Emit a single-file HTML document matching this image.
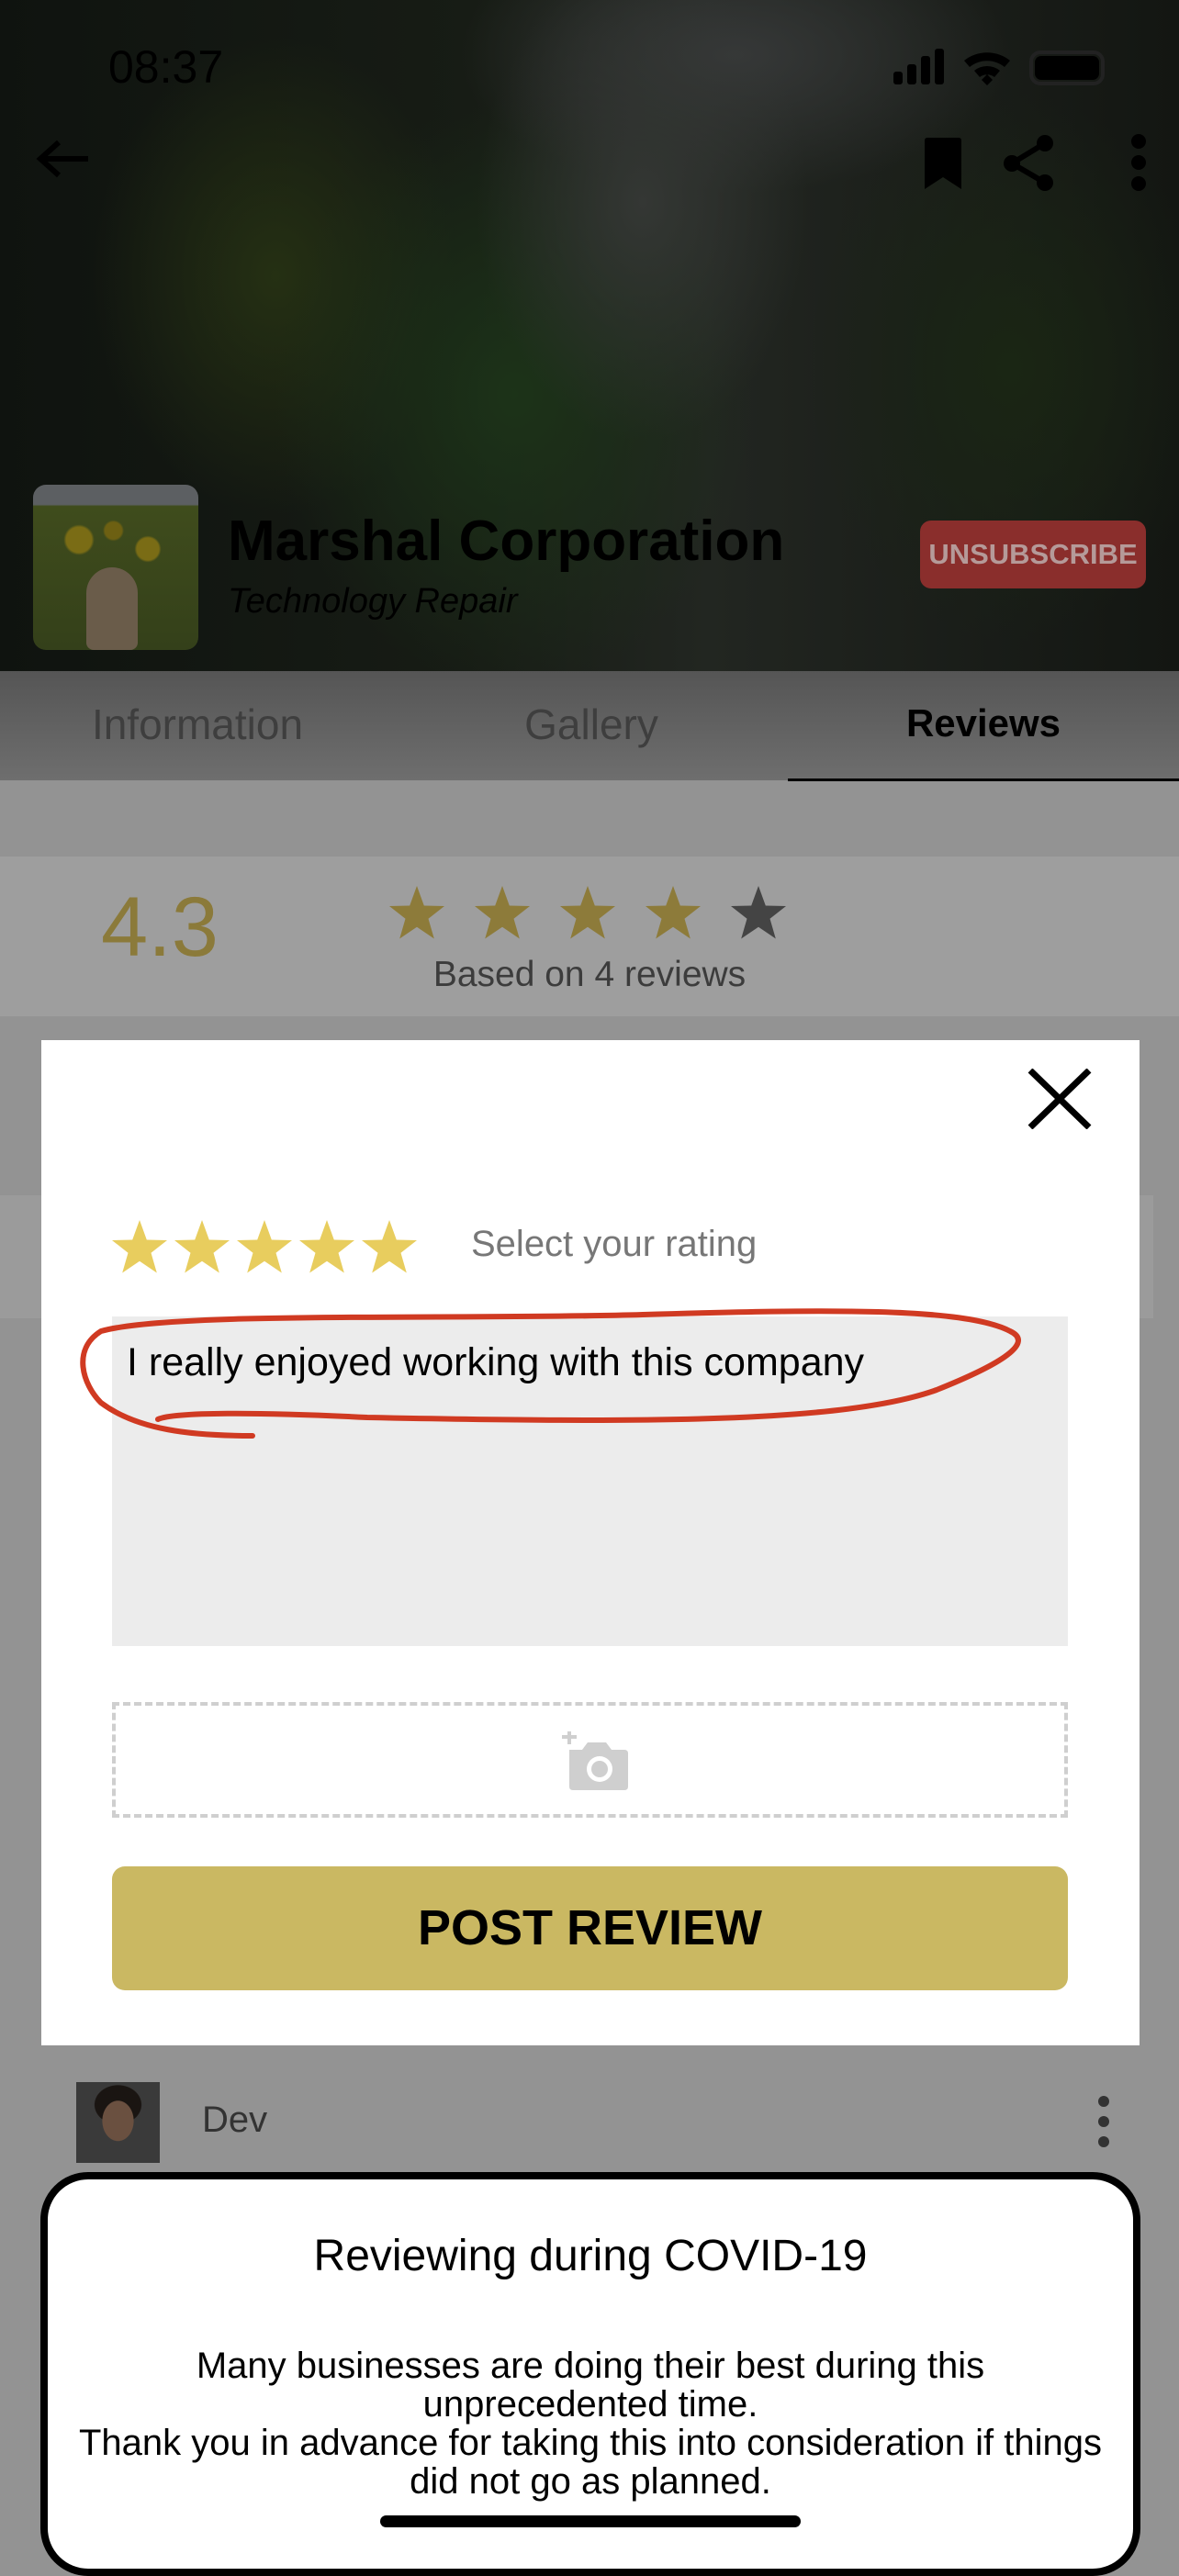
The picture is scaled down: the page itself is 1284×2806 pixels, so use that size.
<!DOCTYPE html>
<html><head><meta charset="utf-8"><style>
*{margin:0;padding:0;box-sizing:border-box}
body{width:1284px;height:2778px;position:relative;overflow:hidden;background:#939393;font-family:"Liberation Sans",sans-serif}
.a{position:absolute}
</style></head><body>
<div class="a" style="left:0;top:0;width:1284px;height:850px;overflow:hidden;background:
radial-gradient(ellipse 180px 260px at 700px 220px,#343734,transparent),
radial-gradient(ellipse 260px 320px at 560px 430px,#1c3318,transparent),
radial-gradient(ellipse 200px 260px at 300px 300px,#253013,transparent),
radial-gradient(ellipse 220px 300px at 1100px 400px,#1a2614,transparent),
radial-gradient(ellipse 300px 150px at 800px 60px,#363838,transparent),
linear-gradient(90deg,#0f130f,#171c15 40%,#222621 60%,#131612)">
</div>
<div class="a" style="left:0;top:731px;width:1284px;height:119px;background:linear-gradient(#555,#6e6e6e)"></div>
<div class="a" style="left:0;top:762px;width:430px;text-align:center;font-size:46px;color:#3e3e3e">Information</div>
<div class="a" style="left:430px;top:762px;width:428px;text-align:center;font-size:46px;color:#3e3e3e">Gallery</div>
<div class="a" style="left:858px;top:764px;width:426px;text-align:center;font-size:42px;color:#000;font-weight:bold">Reviews</div>
<div class="a" style="left:858px;top:848px;width:426px;height:3px;background:#000"></div>

<div class="a" style="left:118px;top:44px;font-size:50px;color:#000">08:37</div>
<svg class="a" style="left:970px;top:50px" width="240" height="46" viewBox="0 0 240 46">
<rect x="3" y="28" width="10" height="14" rx="3"/><rect x="18" y="20" width="10" height="22" rx="3"/><rect x="33" y="11" width="10" height="31" rx="3"/><rect x="48" y="3" width="10" height="39" rx="3"/>
<path d="M80 16a40 40 0 0 1 50 0l-6 7a30 30 0 0 0-38 0z M91 27a22 22 0 0 1 28 0l-6 7a13 13 0 0 0-16 0z M99 37l6-6 6 6-6 6z"/>
<rect x="153" y="7" width="78" height="34" rx="10" fill="none" stroke="#222" stroke-width="4"/><rect x="157" y="11" width="70" height="26" rx="7"/>
</svg>
<svg class="a" style="left:36px;top:150px" width="70" height="46" viewBox="0 0 70 46"><path d="M60 23H10M28 5L8 23l20 18" fill="none" stroke="#000" stroke-width="6"/></svg>
<svg class="a" style="left:1004px;top:148px" width="46" height="58" viewBox="0 0 46 58"><path d="M3 5q0-3 3-3h34q3 0 3 3v53L23 45 3 58z"/></svg>
<svg class="a" style="left:1090px;top:144px" width="64" height="66" viewBox="0 0 64 66"><circle cx="48" cy="12" r="9"/><circle cx="12" cy="34" r="9"/><circle cx="48" cy="55" r="9"/><path d="M48 12L12 34l36 21" fill="none" stroke="#000" stroke-width="6"/></svg>
<svg class="a" style="left:1226px;top:144px" width="28" height="66" viewBox="0 0 28 66"><circle cx="14" cy="10" r="8"/><circle cx="14" cy="33" r="8"/><circle cx="14" cy="56" r="8"/></svg>

<div class="a" style="left:36px;top:528px;width:180px;height:180px;border-radius:14px;overflow:hidden;background:linear-gradient(#5c5f62 0,#5c5f62 12%,#3f4c1c 13%,#34401a 100%)">
<div class="a" style="left:20px;top:30px;width:150px;height:100px;background:radial-gradient(circle at 20% 30%,#7a6c15 10%,transparent 12%),radial-gradient(circle at 70% 40%,#7a6c15 10%,transparent 12%),radial-gradient(circle at 45% 20%,#6d6012 8%,transparent 10%)"></div>
<div class="a" style="left:58px;top:90px;width:56px;height:90px;border-radius:28px 28px 8px 8px;background:#6a5c4a"></div>
</div>
<div class="a" style="left:248px;top:554px;font-size:62px;font-weight:bold;color:#000">Marshal Corporation</div>
<div class="a" style="left:248px;top:634px;font-size:38px;font-style:italic;color:#000">Technology Repair</div>
<div class="a" style="left:1002px;top:567px;width:246px;height:74px;border-radius:12px;background:#8a2e2c;color:#b59a99;font-size:31px;font-weight:bold;text-align:center;line-height:74px">UNSUBSCRIBE</div>

<div class="a" style="left:0;top:933px;width:1284px;height:174px;background:#9e9e9e"></div>
<div class="a" style="left:110px;top:958px;font-size:92px;color:#8b7a3a">4.3</div>
<svg class="a" style="left:424px;top:965px" width="440" height="70" viewBox="0 0 440 70">
<defs><path id="s" d="M30 0l7.8 21.5 22.2.5-17.5 13.7 6.3 21.8L30 44.7 11.2 57.5l6.3-21.8L0 22l22.2-.5z"/></defs>
<use href="#s" x="0" fill="#8d7b3a"/><use href="#s" x="93" fill="#8d7b3a"/><use href="#s" x="186" fill="#8d7b3a"/><use href="#s" x="279" fill="#8d7b3a"/><use href="#s" x="372" fill="#444"/>
</svg>
<div class="a" style="left:400px;top:1040px;width:484px;text-align:center;font-size:39px;color:#3c3c3c">Based on 4 reviews</div>

<div class="a" style="left:0;top:1302px;width:1256px;height:134px;background:#9b9b9b"></div>

<div class="a" style="left:45px;top:1133px;width:1196px;height:1095px;background:#fff"></div>
<svg class="a" style="left:1118px;top:1164px" width="72" height="66" viewBox="0 0 72 66"><path d="M4 2l64 62M68 2L4 64" stroke="#000" stroke-width="7"/></svg>
<svg class="a" style="left:122px;top:1329px" width="340" height="62" viewBox="0 0 340 62">
<defs><path id="t" d="M30 0l7.8 21.5 22.2.5-17.5 13.7 6.3 21.8L30 44.7 11.2 57.5l6.3-21.8L0 22l22.2-.5z"/></defs>
<g fill="#e8cd5e"><use href="#t" x="0"/><use href="#t" x="68"/><use href="#t" x="136"/><use href="#t" x="204"/><use href="#t" x="272"/></g>
</svg>
<div class="a" style="left:513px;top:1333px;font-size:40px;color:#777">Select your rating</div>
<div class="a" style="left:122px;top:1434px;width:1041px;height:359px;background:#ececec"></div>
<div class="a" style="left:138px;top:1460px;font-size:43px;color:#000">I really enjoyed working with this company</div>
<svg class="a" style="left:0;top:1400px" width="1284" height="240" viewBox="0 0 1284 240">
<path d="M275 164C210 164 150 158 110 128 90 108 78 70 110 50 190 28 500 38 700 32 900 26 1050 24 1100 50 1130 64 1080 90 1020 114 920 150 700 150 400 144 280 138 190 138 172 146" fill="none" stroke="#d03a22" stroke-width="6" stroke-linecap="round"/>
</svg>
<div class="a" style="left:122px;top:1854px;width:1041px;height:126px;border:4px dashed #cfcfcf"></div>
<svg class="a" style="left:608px;top:1886px" width="82" height="66" viewBox="0 0 82 66">
<path d="M4 6h16M12 0v14" stroke="#cfcfcf" stroke-width="4"/>
<path d="M12 20h14l6-8h20l6 8h14q4 0 4 4v36q0 4-4 4H16q-4 0-4-4z" fill="#cfcfcf"/>
<circle cx="45" cy="41" r="14" fill="#fff"/><circle cx="45" cy="41" r="9" fill="#cfcfcf"/>
</svg>
<div class="a" style="left:122px;top:2033px;width:1041px;height:135px;border-radius:14px;background:#cab862;text-align:center;line-height:135px;font-size:54px;font-weight:bold;color:#000">POST REVIEW</div>

<div class="a" style="left:83px;top:2268px;width:91px;height:88px;background:radial-gradient(ellipse 28px 36px at 50% 48%,#6a5040 60%,transparent 62%),radial-gradient(ellipse 36px 30px at 50% 28%,#1a1512 70%,transparent 72%),#3a3a3a"></div>
<div class="a" style="left:220px;top:2287px;font-size:40px;color:#333">Dev</div>
<svg class="a" style="left:1190px;top:2280px" width="24" height="62" viewBox="0 0 24 62"><circle cx="12" cy="9" r="6" fill="#333"/><circle cx="12" cy="31" r="6" fill="#333"/><circle cx="12" cy="53" r="6" fill="#333"/></svg>

<div class="a" style="left:44px;top:2366px;width:1198px;height:440px;background:#fff;border:8px solid #000;border-radius:52px"></div>
<div class="a" style="left:44px;top:2430px;width:1198px;text-align:center;font-size:48px;color:#000">Reviewing during COVID-19</div>
<div class="a" style="left:50px;top:2556px;width:1186px;text-align:center;font-size:40px;line-height:42px;color:#000">Many businesses are doing their best during this<br>unprecedented time.<br>Thank you in advance for taking this into consideration if things<br>did not go as planned.</div>
<div class="a" style="left:414px;top:2740px;width:458px;height:13px;border-radius:7px;background:#000"></div>
</body></html>
